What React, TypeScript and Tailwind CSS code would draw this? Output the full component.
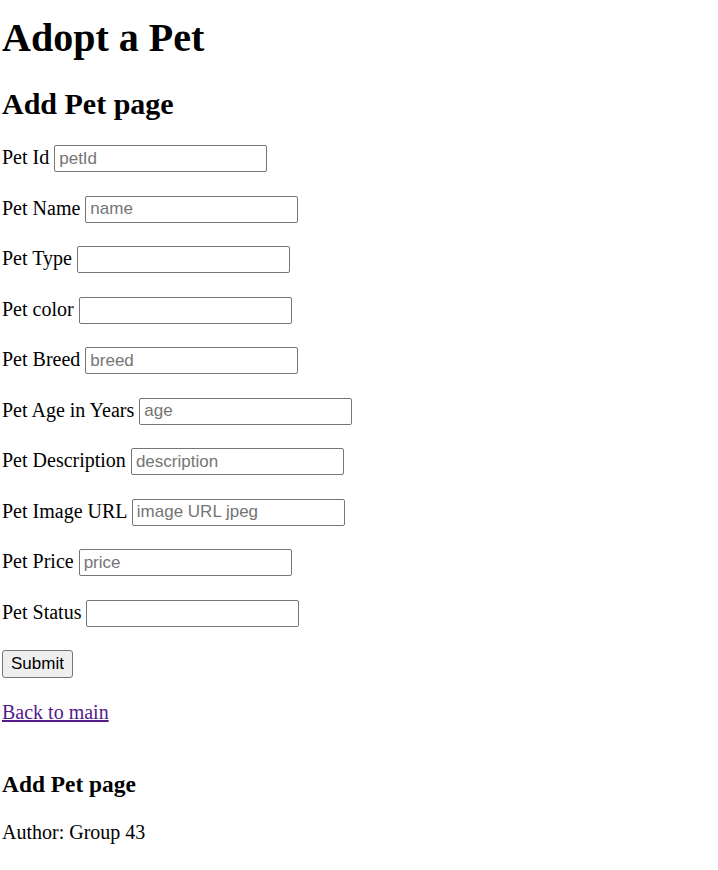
// Add Pet page: plain browser-default look, recreated with Tailwind
import React from 'react';

type Field = { label: string; placeholder?: string };

const fields: Field[] = [
  { label: 'Pet Id', placeholder: 'petId' },
  { label: 'Pet Name', placeholder: 'name' },
  { label: 'Pet Type' },
  { label: 'Pet color' },
  { label: 'Pet Breed', placeholder: 'breed' },
  { label: 'Pet Age in Years', placeholder: 'age' },
  { label: 'Pet Description', placeholder: 'description' },
  { label: 'Pet Image URL', placeholder: 'image URL jpeg' },
  { label: 'Pet Price', placeholder: 'price' },
  { label: 'Pet Status' },
];

export default function App() {
  return (
    <div className="min-h-screen bg-white text-black font-['Liberation_Serif','Times_New_Roman',serif] pl-[2px] flex flex-col items-start">
      <h1 className="mt-[15px] text-[40px] leading-[46px] font-bold">Adopt a Pet</h1>
      <h2 className="mt-[25px] text-[30px] leading-[35px] font-bold">Add Pet page</h2>

      <form className="mt-[24px] flex flex-col gap-[20px]" onSubmit={e => e.preventDefault()}>
        {fields.map(f => (
          <p key={f.label} className="h-[30.5px] text-[20px] leading-[23px] whitespace-nowrap">
            {f.label}{' '}
            <input
              type="text"
              placeholder={f.placeholder}
              className="inline-block align-baseline w-[213px] h-[27px] pl-[4px] pr-[3px] border border-[#767676] rounded-[2px] bg-white font-['Liberation_Sans',Arial,sans-serif] text-[17px] leading-normal placeholder:text-[#757575] outline-none"
            />
          </p>
        ))}
        <button
          type="submit"
          className="-mt-[0.5px] w-[71px] h-[28px] bg-[#efefef] border border-[#767676] rounded-[3px] font-['Liberation_Sans',Arial,sans-serif] text-[17px] leading-none text-black"
        >
          Submit
        </button>
      </form>

      <a href="#" className="mt-[23.7px] text-[20px] leading-[23px] text-[#551a8b] underline">
        Back to main
      </a>

      <h3 className="mt-[47px] text-[23.4px] leading-[27px] font-bold">Add Pet page</h3>
      <p className="mt-[23px] text-[20px] leading-[23px]">Author: Group 43</p>
    </div>
  );
}
